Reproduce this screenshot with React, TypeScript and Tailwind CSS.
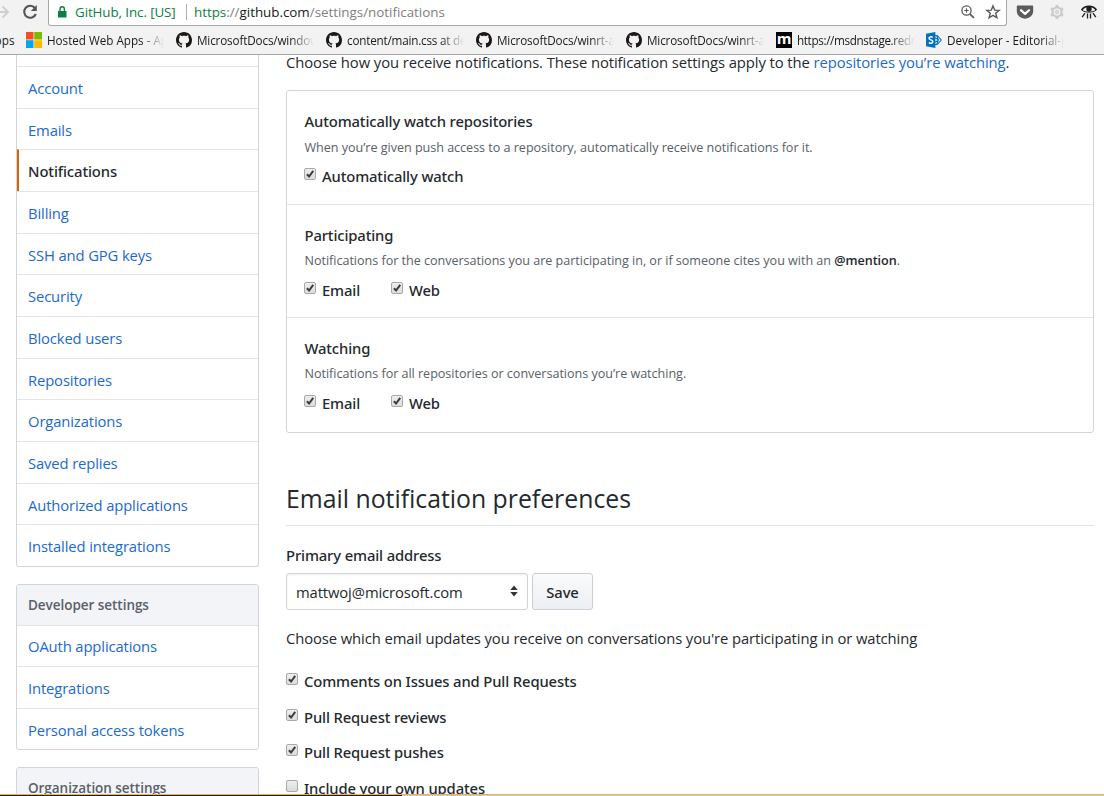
import type { ReactNode } from "react";
import { clsx } from "clsx";

function GitHubMark() {
  return (
    <svg viewBox="0 0 16 16" className="size-4 fill-[#1b1817]">
      <path d="M8 0C3.58 0 0 3.58 0 8c0 3.54 2.29 6.53 5.47 7.59.4.07.55-.17.55-.38 0-.19-.01-.82-.01-1.49-2.01.37-2.53-.49-2.69-.94-.09-.23-.48-.94-.82-1.13-.28-.15-.68-.52-.01-.53.63-.01 1.08.58 1.23.82.72 1.21 1.87.87 2.33.66.07-.52.28-.87.51-1.07-1.78-.2-3.64-.89-3.64-3.95 0-.87.31-1.59.82-2.15-.08-.2-.36-1.02.08-2.12 0 0 .67-.21 2.2.82.64-.18 1.32-.27 2-.27s1.36.09 2 .27c1.53-1.04 2.2-.82 2.2-.82.44 1.1.16 1.92.08 2.12.51.56.82 1.27.82 2.15 0 3.07-1.87 3.75-3.65 3.95.29.25.54.73.54 1.48 0 1.07-.01 1.93-.01 2.2 0 .21.15.46.55.38A8.01 8.01 0 0 0 16 8c0-4.42-3.58-8-8-8z" />
    </svg>
  );
}

function WindowsLogo() {
  return (
    <svg viewBox="0 0 16 16" className="size-4">
      <path fill="#f25022" d="M0 0h7.5v7.5H0z" />
      <path fill="#7fba00" d="M8.2 0H16v7.5H8.2z" />
      <path fill="#00a4ef" d="M0 8.2h7.5V16H0z" />
      <path fill="#ffb900" d="M8.2 8.2H16V16H8.2z" />
    </svg>
  );
}

function MsdnLogo() {
  return (
    <span className="flex size-4 items-center justify-center bg-black font-['Open_Sans',sans-serif] text-[15px] leading-none font-bold text-white">
      <span className="-mt-1">m</span>
    </span>
  );
}

function SharePointLogo() {
  return (
    <svg viewBox="0 0 16 16" className="size-4">
      <path fill="none" stroke="#0072c6" strokeWidth="1.1" d="M9 3.5h2.2L15.3 8l-4.1 4.5H9M9 5.6l3.6 2.4L9 10.4M10.8 3.8l1.6 4.2-1.6 4.2" />
      <path fill="#0072c6" d="M0 1.8 9.4 0v16L0 14.2z" />
      <path fill="none" stroke="#fff" strokeWidth="1.5" d="M6.7 5.3C5.4 4.5 3 4.7 3 6.3c0 1.8 3.8 1.4 3.8 3.4 0 1.700-2.500 1.900-4 1" />
    </svg>
  );
}

const bookmarks: { icon: ReactNode; label: string; className: string }[] = [
  { icon: <WindowsLogo />, label: "Hosted Web Apps - Ap", className: "tracking-[-0.02px]" },
  { icon: <GitHubMark />, label: "MicrosoftDocs/windows", className: "tracking-[-0.15px]" },
  { icon: <GitHubMark />, label: "content/main.css at dev", className: "tracking-[-0.2px]" },
  { icon: <GitHubMark />, label: "MicrosoftDocs/winrt-ap", className: "tracking-[-0.15px]" },
  { icon: <GitHubMark />, label: "MicrosoftDocs/winrt-ap", className: "tracking-[-0.15px]" },
  { icon: <MsdnLogo />, label: "https://msdnstage.redm", className: "tracking-[-0.36px]" },
  { icon: <SharePointLogo />, label: "Developer - Editorial-p", className: "tracking-[-0.02px]" },
];

function BrowserBar() {
  return (
    <header className="flex h-[55px] shrink-0 flex-col border-b border-[#a6a6a6] bg-[#f2f2f2]">
      <div className="flex h-[26px]">
        <div className="flex w-12 shrink-0 gap-3">
          <svg viewBox="0 0 10 24" className="h-6 w-2.5" fill="none" stroke="#cfcfcf" strokeWidth="2">
            <path d="M0 12h8M2.500 6.500 8 12l-5.500 5.500" />
          </svg>
          <svg viewBox="0 0 16 24" className="h-6 w-4" fill="none">
            <path d="M12.900 8A6 6 0 1 0 13.800 14" stroke="#555" strokeWidth="2.100" />
            <path d="M14.800 5v6H8.800z" fill="#555" />
          </svg>
        </div>
        <div className="flex h-[26px] w-[959px] items-center rounded-b-[3px] border border-t-0 border-[#a8a8a8] bg-white pb-[2px] text-[13.400px] tracking-[-0.02px]">
          <svg viewBox="0 0 10 14" className="ml-2 h-3.5 w-2.5">
            <path fill="#0b8043" d="M1 6h8.500v6.500H1z" />
            <path fill="none" stroke="#0b8043" strokeWidth="1.400" d="M3 6.500V4a2.200 2.200 0 0 1 4.400 0v2.500" />
          </svg>
          <span className="ml-2 w-[111px] tracking-[-0.1px] whitespace-nowrap text-[#0b8043]">GitHub, Inc. [US]</span>
          <span className="mt-px h-4 w-px bg-[#b0b0b0]" />
          <span className="ml-[7px] text-[#808080]">
            <span className="text-[#0b8043]">https</span>://<span className="text-[#202020]">github.com</span>/settings/notifications
          </span>
          <svg viewBox="0 0 16 16" className="mr-[9px] ml-auto size-4" fill="none" stroke="#5a5a5a" strokeWidth="1.300">
            <circle cx="6.500" cy="6.500" r="4.600" />
            <path d="M4.300 6.500h4.400M6.500 4.300v4.400" strokeWidth="1.100" />
            <path d="m9.800 9.800 4.100 4.100" strokeWidth="1.800" />
          </svg>
          <svg viewBox="0 0 16 16" className="mr-[5px] size-4" fill="none" stroke="#5a5a5a" strokeWidth="1.400">
            <path d="m8 1.900 1.700 4.200 4.500.3-3.500 2.900 1.200 4.500L8 11.400l-3.900 2.400 1.200-4.500-3.500-2.900 4.500-.3z" />
          </svg>
        </div>
        <div className="flex flex-1 items-center gap-4 pb-[2px] pl-[9px]">
          <svg viewBox="0 0 18 16" className="h-4 w-[18px]">
            <path fill="#5b5b5b" d="M2 1.500h14c.8 0 1.200.5 1.200 1.200v4.800a8.200 7.200 0 0 1-16.400 0V2.700C.8 2 1.200 1.500 2 1.500z" />
            <path fill="none" stroke="#fff" strokeWidth="2.200" strokeLinecap="round" strokeLinejoin="round" d="M5 6.200 9 9.900l4-3.700" />
          </svg>
          <svg viewBox="0 0 16 16" className="-ml-px size-4" fill="none" stroke="#cbcbcb">
            <circle cx="8" cy="8" r="4.600" strokeWidth="2.200" />
            <circle cx="8" cy="8" r="1.400" strokeWidth="1.200" />
            <path strokeWidth="2.600" d="M8 1v2.500M8 12.500V15M1.900 4.500l2.200 1.200M11.900 10.300l2.200 1.200M1.900 11.500l2.200-1.200M11.900 5.700l2.200-1.200" />
          </svg>
          <svg viewBox="0 0 16 16" className="size-4" fill="none" stroke="#1e1e1e">
            <path d="M.5 6.200C3.500 1 12.500 1 15.500 6.200" strokeWidth="1.700" />
            <path d="M1 6.200C4 8.800 12 8.800 15 6.200" strokeWidth="1" />
            <circle cx="8" cy="5" r="2.700" fill="#1e1e1e" stroke="none" />
            <path d="M6.500 9.500v5M9.500 9.500v5M4 9.200l-2.800 4M12 9.200l2.800 4" strokeWidth="1.300" />
          </svg>
        </div>
      </div>
      <div className="flex h-7 items-center text-[11.700px] text-[#1a1a1a]">
        <span className="flex w-[26px] shrink-0 justify-end overflow-hidden pr-[11.500px]">Apps</span>
        {bookmarks.map((b, i) => (
          <span key={i} className="flex w-[150px] shrink-0 items-center gap-[5px]">
            <span className="shrink-0">{b.icon}</span>
            <span className={clsx("w-[117px] overflow-hidden whitespace-nowrap [mask-image:linear-gradient(to_right,black_80%,transparent)]", b.className)}>
              {b.label}
            </span>
          </span>
        ))}
      </div>
    </header>
  );
}

function NavRow({ label, active }: { label: string; active?: boolean }) {
  return (
    <a
      className={clsx(
        "flex h-[41.680px] shrink-0 items-center border-t border-[#e1e4e8] pt-px whitespace-nowrap",
        active
          ? "border-l-2 border-l-[#d8640c] pl-[9px] font-['Noto_Sans',sans-serif] font-medium tracking-[-0.1px] text-[#24292e]"
          : "pl-[11px] tracking-[-0.13px] text-[#1b6ad0]",
      )}
    >
      {label}
    </a>
  );
}

function NavHeading({ children }: { children: ReactNode }) {
  return (
    <h3 className="flex h-[39.500px] shrink-0 items-center bg-[#f3f4f8] pt-px pl-[11px] text-[13.500px] font-semibold tracking-[-0.04px] text-[#586069]">
      {children}
    </h3>
  );
}

const settings = [
  "Account", "Emails", "Notifications", "Billing", "SSH and GPG keys", "Security", "Blocked users",
  "Repositories", "Organizations", "Saved replies", "Authorized applications", "Installed integrations",
];

function Sidebar() {
  return (
    <aside className="flex w-[243px] shrink-0 flex-col gap-[17px]">
      <nav className="flex h-[512px] shrink-0 flex-col rounded-b-[3px] border border-t-0 border-[#d1d5da] pt-[11px]">
        {settings.map((s) => (
          <NavRow key={s} label={s} active={s === "Notifications"} />
        ))}
      </nav>
      <nav className="flex h-[166px] shrink-0 flex-col overflow-hidden rounded-[3px] border border-[#d1d5da]">
        <NavHeading>Developer settings</NavHeading>
        <NavRow label="OAuth applications" />
        <NavRow label="Integrations" />
        <NavRow label="Personal access tokens" />
      </nav>
      <nav className="h-[60px] shrink-0 overflow-hidden rounded-t-[3px] border border-[#d1d5da]">
        <NavHeading>Organization settings</NavHeading>
      </nav>
    </aside>
  );
}

const strong = "font-['Noto_Sans',sans-serif] font-medium tracking-[-0.13px]";

function Check({ label, checked = true }: { label: string; checked?: boolean }) {
  return (
    <label className={clsx("flex h-5 shrink-0 items-center gap-[6px] whitespace-nowrap", strong)}>
      <svg viewBox="0 0 12 12" className="mb-1 size-3 shrink-0">
        <defs>
          <linearGradient id="boxFill" x2="0" y2="1">
            <stop stopColor="#eee" />
            <stop offset="1" stopColor="#dcdcdc" />
          </linearGradient>
        </defs>
        <rect x=".5" y=".5" width="11" height="11" rx="1.500" fill="url(#boxFill)" stroke="#a9a9a9" />
        {checked && <path d="m2.900 6.200 2.200 2.300L9.200 2.800" fill="none" stroke="#3c3c3c" strokeWidth="2" />}
      </svg>
      <span className="w-[69px]">{label}</span>
    </label>
  );
}

function Panel({ title, note, noteClass, options, className }: { title: string; note: ReactNode; noteClass: string; options: string[]; className: string }) {
  return (
    <div className={clsx("flex shrink-0 flex-col border-[#e1e4e8] pt-5 pl-[17px]", className)}>
      <h4 className={clsx("h-5 pl-[.5px]", strong)}>{title}</h4>
      <p className={clsx("h-5 pl-[.5px] text-[12.600px] tracking-[-0.035px] text-[#586069]", noteClass)}>{note}</p>
      <div className="flex">
        {options.map((o) => (
          <Check key={o} label={o} />
        ))}
      </div>
    </div>
  );
}

function Content() {
  return (
    <main className="flex w-[808px] shrink-0 flex-col">
      <p className="-mt-[3px] h-5 shrink-0 tracking-[-0.08px] whitespace-nowrap">
        Choose how you receive notifications. These notification settings apply to the{" "}
        <a className="text-[#1b6ad0]">repositories you’re watching</a>.
      </p>
      <section className="mt-[18px] flex h-[343px] shrink-0 flex-col rounded-[3px] border border-[#d1d5da]">
        <Panel
          className="h-[113px]"
          noteClass="mt-[7px] mb-2"
          title="Automatically watch repositories"
          note="When you’re given push access to a repository, automatically receive notifications for it."
          options={["Automatically watch"]}
        />
        <Panel
          className="h-[113px] border-t"
          noteClass="mt-[6px] mb-[9px]"
          title="Participating"
          note={<>Notifications for the conversations you are participating in, or if someone cites you with an <b className="font-semibold text-[#24292e]">@mention</b>.</>}
          options={["Email", "Web"]}
        />
        <Panel
          className="h-[115px] border-t"
          noteClass="mt-[6px] mb-[9px]"
          title="Watching"
          note="Notifications for all repositories or conversations you’re watching."
          options={["Email", "Web"]}
        />
      </section>
      <h2 className="mt-[45px] h-[48px] shrink-0 border-b border-[#e1e4e8] pt-[4px] text-[24.800px] leading-[32px] tracking-normal">Email notification preferences</h2>
      <label className={clsx("mt-[19px] h-5 shrink-0", strong)}>Primary email address</label>
      <div className="mt-[8px] flex h-[37px] shrink-0 gap-1">
        <button className="flex w-[242px] items-center justify-between rounded-[3px] border border-[#d1d5da] bg-white pt-px pr-[9px] pl-[9px] tracking-[-0.12px] shadow-[inset_0_1px_2px_rgba(27,31,35,0.075)]">
          mattwoj@microsoft.com
          <svg viewBox="0 0 8 12" className="mb-[2px] h-3 w-2 fill-[#333]">
            <path d="M4 .5 7.700 5H.3zM4 11.500.3 7h7.400z" />
          </svg>
        </button>
        <button className={clsx("w-[61px] rounded-[3px] border border-[#cbcfd4] bg-linear-to-b from-[#fafbfc] to-[#eceff3] pt-px", strong)}>Save</button>
      </div>
      <p className="mt-[18px] h-5 shrink-0 tracking-[-0.095px] whitespace-nowrap">
        Choose which email updates you receive on conversations you're participating in or watching
      </p>
      <div className="mt-[23px] flex flex-col gap-[15.700px]">
        <Check label="Comments on Issues and Pull Requests" />
        <Check label="Pull Request reviews" />
        <Check label="Pull Request pushes" />
        <Check label="Include your own updates" checked={false} />
      </div>
    </main>
  );
}

export default function App() {
  return (
    <div className="flex h-[796px] w-[1104px] flex-col overflow-hidden bg-white font-['Open_Sans',sans-serif] text-[14.800px] leading-5 text-[#24292e]">
      <BrowserBar />
      <div className="flex h-[739px] shrink-0 gap-[27px] overflow-hidden pl-4 tracking-[-0.08px]">
        <Sidebar />
        <Content />
      </div>
      <div className="h-px shrink-0 bg-[#f0b53c]" />
      <div className="flex h-px shrink-0 bg-[#c8c8c8]">
        <div className="w-[402px] bg-[#1c1714]" />
      </div>
    </div>
  );
}
